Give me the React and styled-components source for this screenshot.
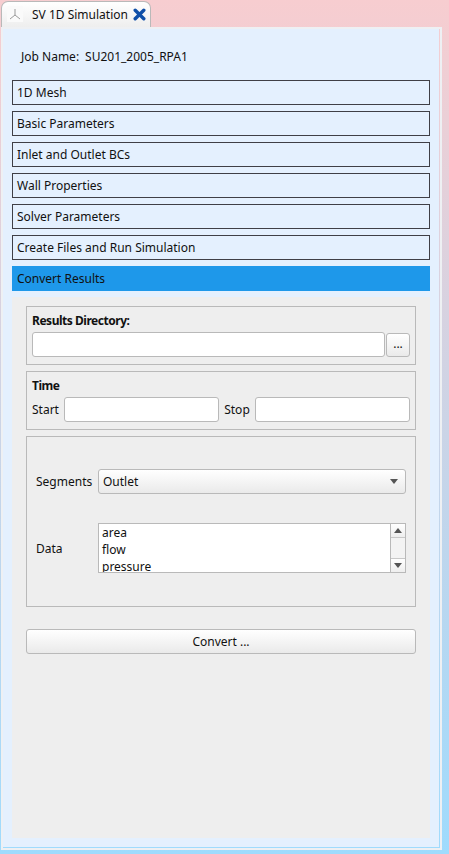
import styled, { createGlobalStyle } from 'styled-components';

const Global = createGlobalStyle`
  html, body {
    margin: 0;
    padding: 0;
  }

  body {
    font-family: "Noto Sans", "Open Sans", sans-serif;
    font-size: 12px;
    color: #111;
  }
`;

const sections = [
  '1D Mesh',
  'Basic Parameters',
  'Inlet and Outlet BCs',
  'Wall Properties',
  'Solver Parameters',
  'Create Files and Run Simulation',
];

export default function App() {
  return (
    <>
      <Global />
      <Page>
        <TabBar>
          <Tab>
            <TabLogo viewBox="0 0 16 16">
              <path d="M8 3v6M8 9l-5 4M8 9l5 4" stroke="#9a9a9a" strokeWidth="1" fill="none" />
            </TabLogo>
            <TabTitle>SV 1D Simulation</TabTitle>
            <CloseIcon viewBox="0 0 13 13">
              <path d="M2.2 2.2l8.6 8.6M10.8 2.2l-8.6 8.6" stroke="#0f4fa8" strokeWidth="3.4" strokeLinecap="round" fill="none" />
            </CloseIcon>
          </Tab>
        </TabBar>
        <PaneFrame>
          <Pane>
            <JobRow>
              <span>Job Name:</span>
              <span>SU201_2005_RPA1</span>
            </JobRow>
            <SectionList>
              {sections.map((name) => (
                <SectionButton key={name}>{name}</SectionButton>
              ))}
              <SectionButton $active>Convert Results</SectionButton>
            </SectionList>
            <ConvertPanel>
              <GroupBox>
                <GroupTitle>Results Directory:</GroupTitle>
                <FieldRow>
                  <TextField />
                  <BrowseButton>...</BrowseButton>
                </FieldRow>
              </GroupBox>
              <GroupBox>
                <GroupTitle>Time</GroupTitle>
                <FieldRow>
                  <FieldLabel>Start</FieldLabel>
                  <TextField />
                  <FieldLabel $left={5}>Stop</FieldLabel>
                  <TextField />
                </FieldRow>
              </GroupBox>
              <OptionsBox>
                <OptionRow>
                  <OptionLabel>Segments</OptionLabel>
                  <ComboBox>
                    <span>Outlet</span>
                    <ArrowIcon viewBox="0 0 8 5">
                      <path d="M0 0h8L4 5z" fill="#555" />
                    </ArrowIcon>
                  </ComboBox>
                </OptionRow>
                <OptionRow $top={29}>
                  <OptionLabel>Data</OptionLabel>
                  <ListBox>
                    <ListItems>
                      <ListItem>area</ListItem>
                      <ListItem>flow</ListItem>
                      <ListItem>pressure</ListItem>
                    </ListItems>
                    <ScrollBar>
                      <ScrollStep>
                        <ArrowIcon viewBox="0 0 8 5">
                          <path d="M0 5h8L4 0z" fill="#555" />
                        </ArrowIcon>
                      </ScrollStep>
                      <ScrollTrack />
                      <ScrollStep $bottom>
                        <ArrowIcon viewBox="0 0 8 5">
                          <path d="M0 0h8L4 5z" fill="#555" />
                        </ArrowIcon>
                      </ScrollStep>
                    </ScrollBar>
                  </ListBox>
                </OptionRow>
              </OptionsBox>
              <ConvertButton>Convert ...</ConvertButton>
            </ConvertPanel>
          </Pane>
        </PaneFrame>
      </Page>
    </>
  );
}

const Page = styled.div`
  width: 449px;
  height: 854px;
  box-sizing: border-box;
  padding: 1px 7px 4px 1px;
  display: flex;
  flex-direction: column;
  overflow: hidden;
  background: linear-gradient(#f7cdd0, #9fdbfd);
`;

const TabBar = styled.div`
  display: flex;
  height: 26px;
  flex-shrink: 0;
`;

const Tab = styled.div`
  width: 150px;
  box-sizing: border-box;
  display: flex;
  align-items: center;
  padding: 0 2px 1px 5px;
  background: linear-gradient(#ffffff, #eeeeee);
  border: 1px solid #b9b9b9;
  border-bottom: none;
  border-radius: 7px 7px 0 0;
`;

const TabLogo = styled.svg`
  width: 16px;
  height: 16px;
  background: #fafafa;
  flex-shrink: 0;
`;

const TabTitle = styled.span`
  margin-left: 9px;
  white-space: nowrap;
`;

const CloseIcon = styled.svg`
  width: 13px;
  height: 13px;
  margin-left: 5px;
  flex-shrink: 0;
`;

const PaneFrame = styled.div`
  flex: 1;
  display: flex;
  border: 2px solid #eef0f3;
`;

const Pane = styled.div`
  flex: 1;
  box-sizing: border-box;
  padding: 0 9px 9px 9px;
  display: flex;
  flex-direction: column;
  background: #e4f0fe;
  background-clip: padding-box;
  border-right: 1px solid transparent;
  border-bottom: 1px solid transparent;
`;

const JobRow = styled.div`
  height: 51px;
  flex-shrink: 0;
  display: flex;
  align-items: center;
  gap: 6px;
  padding: 4px 0 0 9px;
  box-sizing: border-box;
  white-space: pre;
`;

const SectionList = styled.div`
  display: flex;
  flex-direction: column;
  gap: 6px;
`;

const SectionButton = styled.div`
  height: 25px;
  box-sizing: border-box;
  display: flex;
  align-items: center;
  padding: 0 4px;
  background: ${(props) => (props.$active ? '#1e98ea' : 'transparent')};
  border: 1px solid ${(props) => (props.$active ? '#1e98ea' : '#3f3f46')};
`;

const ConvertPanel = styled.div`
  flex: 1;
  margin-top: 6px;
  padding: 9px 14px 0;
  display: flex;
  flex-direction: column;
  gap: 6px;
  background: #eeeeee;
`;

const GroupBox = styled.div`
  height: 59px;
  box-sizing: border-box;
  padding: 5px 5px 0;
  border: 1px solid #b9b9b9;
`;

const GroupTitle = styled.div`
  height: 17px;
  line-height: 17px;
  font-weight: 700;
  letter-spacing: -0.47px;
`;

const FieldRow = styled.div`
  display: flex;
  align-items: center;
  margin-top: 3px;
`;

const FieldLabel = styled.span`
  margin: 0 5px 0 ${(props) => props.$left || 0}px;
`;

const TextField = styled.div`
  flex: 1;
  height: 25px;
  box-sizing: border-box;
  background: #fff;
  border: 1px solid #b9b9b9;
  border-radius: 3px;
`;

const BrowseButton = styled.div`
  width: 24px;
  height: 24px;
  box-sizing: border-box;
  margin-left: 1px;
  padding-bottom: 3px;
  display: flex;
  align-items: center;
  justify-content: center;
  background: linear-gradient(#ffffff, #eaeaea);
  border: 1px solid #b9b9b9;
  border-radius: 3px;
`;

const OptionsBox = styled.div`
  height: 171px;
  box-sizing: border-box;
  padding: 32px 9px 0 9px;
  border: 1px solid #b9b9b9;
`;

const OptionRow = styled.div`
  display: flex;
  align-items: center;
  margin-top: ${(props) => props.$top || 0}px;
`;

const OptionLabel = styled.span`
  width: 62px;
  flex-shrink: 0;
`;

const ComboBox = styled.div`
  flex: 1;
  height: 25px;
  box-sizing: border-box;
  padding: 0 7px 0 4px;
  display: flex;
  align-items: center;
  justify-content: space-between;
  background: linear-gradient(#ffffff, #eaeaea);
  border: 1px solid #b9b9b9;
  border-radius: 3px;
`;

const ArrowIcon = styled.svg`
  width: 8px;
  height: 5px;
`;

const ListBox = styled.div`
  flex: 1;
  height: 50px;
  box-sizing: border-box;
  display: flex;
  overflow: hidden;
  background: #fff;
  border: 1px solid #b9b9b9;
`;

const ListItems = styled.div`
  flex: 1;
  padding: 0 0 0 3px;
`;

const ListItem = styled.div`
  height: 17px;
  line-height: 17px;
`;

const ScrollBar = styled.div`
  width: 14px;
  display: flex;
  flex-direction: column;
  border-left: 1px solid #b9b9b9;
  background: #f3f3f3;
`;

const ScrollStep = styled.div`
  height: 13px;
  flex-shrink: 0;
  display: flex;
  align-items: center;
  justify-content: center;
  background: linear-gradient(#ffffff, #eeeeee);
  border-bottom: ${(props) => (props.$bottom ? 'none' : '1px solid #c8c8c8')};
  border-top: ${(props) => (props.$bottom ? '1px solid #c8c8c8' : 'none')};
`;

const ScrollTrack = styled.div`
  flex: 1;
`;

const ConvertButton = styled.div`
  height: 25px;
  box-sizing: border-box;
  margin-top: 16px;
  display: flex;
  align-items: center;
  justify-content: center;
  background: linear-gradient(#ffffff, #eaeaea);
  border: 1px solid #b9b9b9;
  border-radius: 3px;
`;
